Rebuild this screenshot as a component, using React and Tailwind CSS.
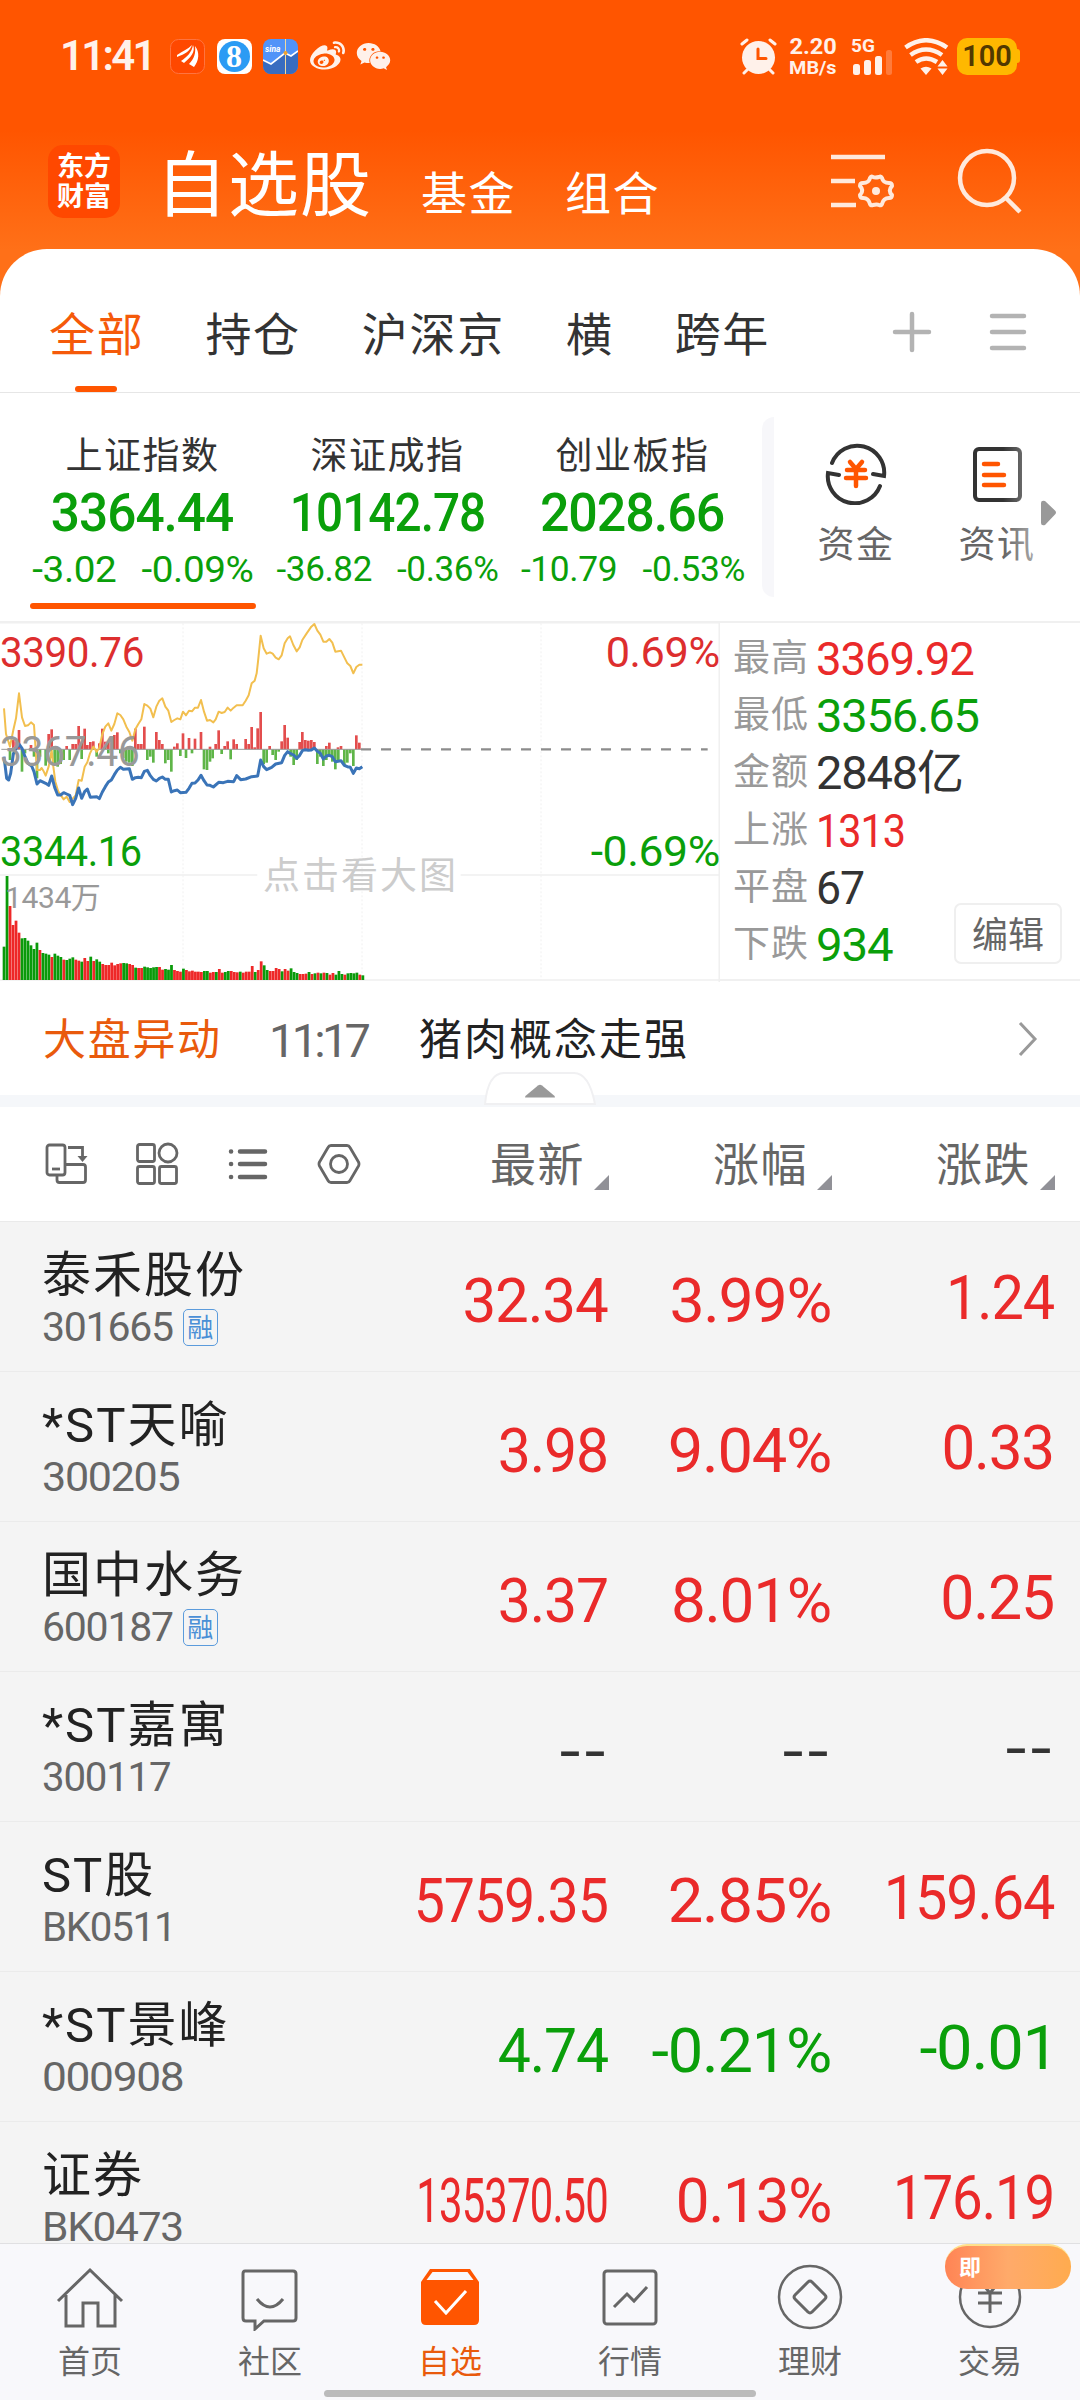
import React from 'react';
import { FaWeibo, FaWeixin } from 'react-icons/fa';

const RED = 'text-[#ea2a2a]';
const GREEN = 'text-[#0a9f0a]';
const DARK = 'text-[#333333]';

const tabs = ['全部', '持仓', '沪深京', '横', '跨年'];

const indexes = [
  { name: '上证指数', value: '3364.44', diff: '-3.02', pct: '-0.09%', active: true, size: 'text-[37px] gap-[24px] scale-x-[1.045]', fit: 'scale-x-[0.97]' },
  { name: '深证成指', value: '10142.78', diff: '-36.82', pct: '-0.36%', size: 'text-[35px] gap-[25px]', fit: 'scale-x-[0.9]' },
  { name: '创业板指', value: '2028.66', diff: '-10.79', pct: '-0.53%', size: 'text-[35px] gap-[25px] scale-x-[1.01]', fit: 'scale-x-[0.98]' },
];

const stats = [
  { label: '最高', value: '3369.92', color: RED, fit: 'scale-x-[0.97]' },
  { label: '最低', value: '3356.65', color: GREEN, fit: 'scale-x-[1]' },
  { label: '金额', value: '2848亿', color: DARK, fit: 'scale-x-[1]' },
  { label: '上涨', value: '1313', color: RED, fit: 'scale-x-[0.88]' },
  { label: '平盘', value: '67', color: DARK, fit: 'scale-x-[0.95]' },
  { label: '下跌', value: '934', color: GREEN, fit: 'scale-x-[1.01]' },
];

const stocks = [
  { name: '泰禾股份', code: '301665', margin: true, color: RED, price: '32.34', pct: '3.99%', diff: '1.24', priceFit: 'scale-x-[0.97]', pctFit: 'scale-x-[1.01]', diffFit: 'scale-x-[0.93]' },
  { name: '*ST天喻', code: '300205', color: RED, price: '3.98', pct: '9.04%', diff: '0.33', codeFit: 'scale-x-[1.05]', priceFit: 'scale-x-[0.95]', pctFit: 'scale-x-[1.02]', diffFit: 'scale-x-[0.97]' },
  { name: '国中水务', code: '600187', margin: true, color: RED, price: '3.37', pct: '8.01%', diff: '0.25', priceFit: 'scale-x-[0.95]', diffFit: 'scale-x-[0.98]' },
  { name: '*ST嘉寓', code: '300117', color: DARK, price: '--', pct: '--', diff: '--', dashes: true, codeFit: 'scale-x-[0.98]' },
  { name: 'ST股', code: 'BK0511', color: RED, price: '5759.35', pct: '2.85%', diff: '159.64', codeFit: 'scale-x-[0.98]', priceFit: 'scale-x-[0.895]', pctFit: 'scale-x-[1.02]', diffFit: 'scale-x-[0.93]' },
  { name: '*ST景峰', code: '000908', color: GREEN, price: '4.74', pct: '-0.21%', diff: '-0.01', codeFit: 'scale-x-[1.08]', priceFit: 'scale-x-[0.95]', pctFit: 'scale-x-[1.02]', diffFit: 'mr-[-4px] scale-x-[1.05]' },
  { name: '证券', code: 'BK0473', color: RED, price: '135370.50', pct: '0.13%', diff: '176.19', codeFit: 'scale-x-[1.035]', priceFit: 'scale-x-[0.675]', pctFit: 'scale-x-[0.97]', diffFit: 'scale-x-[0.88]' },
];

// Chart series, three units per pixel
const averageLine =
  '12,295 18,372 30,410 40,360 48,325 57,250 66,322 75,348 84,346 93,337 102,345 107,420 111,480 120,480 125,474 130,482 137,497 146,470 155,420 160,470 166,515 175,545 191,568 200,560 209,576 218,566 227,556 236,510 245,512 254,470 262,457 270,430 280,410 290,425 298,414 307,372 316,350 325,340 334,362 343,342 352,310 361,315 370,328 379,350 388,366 397,392 406,358 415,342 424,328 433,282 442,287 451,296 460,322 469,290 478,272 487,265 496,290 505,302 514,336 523,330 532,325 541,328 549,305 558,316 567,302 576,304 585,293 594,293 603,270 612,305 621,332 630,330 640,337 647,328 656,305 665,309 674,306 683,293 692,302 701,293 710,286 728,286 737,272 746,256 755,220 764,212 770,190 774,155 782,77 791,115 800,131 810,127 818,131 827,143 836,148 845,136 854,100 863,85 870,79 880,105 890,124 899,112 907,90 920,70 934,50 943,42 952,62 961,74 970,95 979,95 988,87 997,98 1006,125 1023,122 1033,142 1042,160 1051,168 1060,190 1069,171 1078,164 1087,164';
const priceLine =
  '12,440 20,505 26,510 32,490 40,432 48,415 57,402 66,415 75,440 84,460 95,468 102,485 111,522 120,512 137,520 146,526 155,498 164,532 173,555 182,555 191,548 200,552 209,556 218,584 227,565 236,534 245,565 254,545 262,537 271,562 280,561 290,560 298,566 307,546 316,530 325,516 334,510 343,494 352,480 361,472 370,478 379,477 388,476 397,508 406,503 415,502 424,503 433,484 442,481 451,497 460,508 469,513 478,505 487,501 496,508 505,508 514,546 523,542 532,540 541,548 558,547 567,535 576,520 585,519 594,510 603,496 612,512 621,525 630,526 640,531 656,517 670,518 683,514 701,515 710,497 722,509 737,507 755,500 773,498 782,450 791,470 800,479 815,472 827,462 845,458 854,436 863,425 872,431 881,435 890,445 899,436 907,422 916,419 925,421 934,420 943,414 952,424 961,430 970,447 979,438 988,436 997,440 1006,455 1023,452 1033,466 1042,470 1051,472 1060,490 1069,474 1078,476 1087,470';

const upBars = [
  [40, 390], [48, 395], [57, 360], [93, 405], [146, 372], [155, 358], [200, 408], [218, 402], [227, 402], [236, 348], [245, 398], [254, 356],
  [262, 405], [271, 396], [280, 394], [298, 400], [307, 356], [316, 395], [325, 395], [334, 398], [343, 375], [352, 367], [406, 356], [415, 402],
  [424, 402], [433, 350], [469, 366], [478, 390], [487, 402], [523, 410], [532, 400], [549, 370], [567, 384], [585, 386], [603, 366], [630, 410],
  [647, 402], [656, 361], [674, 408], [683, 394], [701, 388], [710, 402], [737, 387], [746, 402], [755, 351], [764, 412], [773, 355], [782, 306],
  [809, 408], [845, 394], [854, 345], [863, 383], [899, 396], [907, 366], [916, 390], [925, 392], [934, 390], [943, 396], [979, 408], [988, 398],
  [1014, 412], [1023, 408], [1069, 376], [1078, 398],
];
const downBars = [
  [30, 450], [66, 485], [75, 430], [102, 440], [111, 505], [120, 440], [137, 467], [164, 465], [173, 470], [182, 462], [191, 450], [209, 450],
  [245, 447], [290, 440], [325, 430], [361, 430], [370, 445], [379, 455], [388, 458], [397, 468], [442, 450], [451, 440], [460, 458], [496, 460],
  [505, 450], [514, 485], [541, 438], [558, 444], [576, 430], [612, 478], [621, 480], [630, 455], [638, 445], [665, 432], [692, 448], [791, 462],
  [800, 458], [818, 435], [827, 450], [836, 425], [872, 440], [881, 465], [890, 450], [952, 462], [961, 440], [970, 468], [979, 450], [988, 440],
  [997, 455], [1006, 478], [1015, 455], [1033, 468], [1042, 458], [1051, 430], [1060, 468],
];

const volumeTops = [
  1010, 798, 888, 945, 932, 968, 985, 984, 992, 1006, 1017, 998, 1020, 1029, 1031, 1034, 1041, 1031, 1037, 1041, 1049, 1050, 1046, 1042, 1049,
  1052, 1055, 1044, 1053, 1040, 1053, 1048, 1055, 1062, 1065, 1065, 1058, 1066, 1062, 1060, 1059, 1060, 1062, 1065, 1073, 1074, 1074, 1070, 1072,
  1074, 1072, 1071, 1071, 1079, 1077, 1079, 1065, 1080, 1083, 1085, 1076, 1080, 1084, 1082, 1085, 1085, 1086, 1083, 1083, 1088, 1086, 1086, 1077,
  1088, 1086, 1083, 1083, 1086, 1087, 1085, 1088, 1085, 1085, 1068, 1086, 1080, 1054, 1066, 1080, 1083, 1083, 1074, 1077, 1084, 1077, 1082, 1075,
  1086, 1089, 1092, 1092, 1091, 1086, 1092, 1090, 1088, 1090, 1088, 1089, 1094, 1089, 1094, 1083, 1092, 1094, 1090, 1089, 1090, 1088, 1094, 1096, 1092,
];
const volumeColors =
  'ggrrrrggggggrgggrgggrgggrrgrrgrggrrrrrrrggrrgrrgggggrrgggrrrgrrrrrrggrrgrrggrrrgrrrrgrrggrrrrgrrgggrrrgrgrgrgrrgggrggggrgr';

function StatusBar() {
  return (
    <div className="flex h-[112px] items-center pl-[60px] pr-[60px] text-[#fff1ea]">
      <span className="w-[110px] text-[42px] font-semibold tracking-[-0.065em] leading-none">11:41</span>
      <div className="flex items-center gap-[11.500px]">
        <svg className="h-[35px] w-[35px]" viewBox="0 0 35 35">
          <rect x="0.5" y="0.5" width="34" height="34" rx="8" fill="#ff4800" stroke="#ff7440" />
          <path d="M7 16c6-4 11-6 15-10-2 6-7 9-15 12z" fill="#fff" />
          <path d="M11 22C17 18 22 13 23 6c3 7-3 13-9 18z" fill="#fff" />
          <path d="M19 25c5-5 7-11 6-18 5 6 4 15-1 21z" fill="#fff" />
        </svg>
        <span className="flex h-[35px] w-[35px] items-center justify-center rounded-[8px] bg-white">
          <span className="flex h-[31px] w-[31px] items-center justify-center rounded-full bg-[#2b9bf4] font-['Liberation_Serif',serif] text-[32px] font-bold leading-none text-white">8</span>
        </span>
        <svg className="h-[35px] w-[35px]" viewBox="0 0 35 35">
          <rect width="35" height="35" rx="8" fill="#5193f8" />
          <path d="M0 21l8 4L22 14l6 3 7-5v15a8 8 0 0 1-8 8H8a8 8 0 0 1-8-8z" fill="#386cc0" />
          <path d="M0 21l8 4L22 14l6 3 7-5" fill="none" stroke="#fff" strokeWidth="1.600" />
          <path d="M22.500 0v35" stroke="#f0d9a0" strokeWidth="1" />
          <circle cx="22.500" cy="14" r="2" fill="#f2a32c" />
          <text x="2" y="12.500" fontSize="8.500" fontStyle="italic" fontWeight="700" fill="#fff">sina</text>
        </svg>
        <FaWeibo className="h-[35px] w-[35px]" />
        <FaWeixin className="h-[35px] w-[35px]" />
      </div>
      <div className="ml-auto flex items-center">
        <svg className="h-[37px] w-[37px]" viewBox="0 0 37 37" fill="none" strokeLinecap="round">
          <circle cx="18.500" cy="19.500" r="16.500" fill="#fff1ea" />
          <path d="M2 6l5-4M35 6l-5-4M7 32l-3 3M30 32l3 3" stroke="#fff1ea" strokeWidth="3" />
          <path d="M18 11v9.500h8" stroke="#ff5500" strokeWidth="3" />
        </svg>
        <div className="ml-[12px] flex w-[48px] flex-col items-center font-bold leading-none">
          <span className="text-[22px] leading-[22px] scale-x-[1.07]">2.20</span>
          <span className="text-[19px] leading-[19px] scale-x-[1.04]">MB/s</span>
        </div>
        <div className="ml-[14px] flex h-[37px] w-[42px] flex-col">
          <span className="mt-[-2px] text-[19px] font-bold leading-[19px]">5G</span>
          <svg className="mt-[-5px] h-[25px] w-[42px]" viewBox="0 0 42 25" fill="#fff1ea">
            <rect x="2" y="14" width="7" height="11" rx="2.500" />
            <rect x="13" y="10" width="7" height="15" rx="2.500" />
            <rect x="24" y="6" width="7" height="19" rx="2.500" />
            <rect x="35" y="0" width="6" height="25" rx="2.500" opacity="0.25" />
          </svg>
        </div>
        <svg className="ml-[11px] h-[37px] w-[45px]" viewBox="0 0 45 37" fill="none" stroke="#fff1ea">
          <path d="M1.500 9.500Q22 -5 43 9.500" strokeWidth="4.500" />
          <path d="M6.500 17Q22 6 38 17" strokeWidth="4.500" />
          <path d="M12 24Q22 17 33 24" strokeWidth="4.500" />
          <path d="M16.500 30.500q5.500-3.500 11 0l-5.500 6.500z" fill="#fff1ea" stroke="none" />
          <path d="M33.500 28.500l5-6.500 5 6.500zM33.500 30.500l5 6.500 5-6.500z" fill="#fff1ea" stroke="none" />
        </svg>
        <div className="ml-[8px] flex items-center">
          <div className="flex h-[37px] w-[60px] items-center justify-center rounded-[10px] bg-[#ffb800] text-[29px] font-semibold leading-none text-[#523800]">100</div>
          <div className="h-[14px] w-[3px] rounded-r-[3px] bg-[#ffb800]" />
        </div>
      </div>
    </div>
  );
}

function TitleBar() {
  return (
    <div className="flex h-[137px] pl-[48px] text-white">
      <div className="mt-[33px] flex h-[73px] w-[72px] flex-col items-center justify-center rounded-[15px] bg-[#ff4800] text-[27px] font-bold leading-[30px]">
        <span>东方</span>
        <span>财富</span>
      </div>
      <span className="ml-[36px] mt-[38px] w-[265px] text-[71px] leading-none tracking-[1px]">自选股</span>
      <span className="mt-[59px] w-[144px] text-[46px] leading-none tracking-[1.500px]">基金</span>
      <span className="mt-[59px] w-[144px] text-[46px] leading-none tracking-[1.500px]">组合</span>
      <svg className="ml-[122px] mt-[41px] h-[58px] w-[64px]" viewBox="0 0 64 58" fill="none" stroke="#ffe9dc" strokeWidth="4">
        <path d="M0 4h54M0 28h24M0 52h25" strokeWidth="4.500" />
        <path
          d="M39 25q1-2 3-1t6 0q2-1 3 1c1 4 3 5 7 5q3 0 3 3c-3 3-3 6 0 9q0 3-3 3c-4 0-6 2-7 6q-1 2-3 1t-6 0q-2 1-3-1c-1-4-3-6-7-6q-3 0-3-3c3-3 3-6 0-9q0-3 3-3c4 0 6-1 7-5z"
          strokeLinejoin="round"
        />
        <circle cx="45" cy="38" r="4" fill="#ffe9dc" stroke="none" />
      </svg>
      <svg className="ml-[62px] mt-[36px] h-[66px] w-[66px]" viewBox="0 0 66 66" fill="none" stroke="#ffe9dc" strokeWidth="4.500">
        <circle cx="30" cy="30" r="27" />
        <path d="M49 50l14 14" />
      </svg>
    </div>
  );
}

function GroupTabs() {
  return (
    <div className="flex h-[144px] items-center border-b border-[#e6e6e6] pl-[49px] text-[46px] leading-none text-[#333333]">
      <div className="flex h-full items-center gap-[61px]">
        {tabs.map((tab, i) => (
          <div key={tab} className={i === 0 ? 'relative flex h-full items-center text-[#f55a0a]' : 'flex h-full items-center'}>
            <span className="mt-[28px] tracking-[1.700px]">{tab}</span>
            {i === 0 && <div className="absolute bottom-0 left-[26px] h-[6px] w-[42px] rounded-[3px] bg-[#ff5500]" />}
          </div>
        ))}
      </div>
      <svg className="ml-auto mt-[23px] h-[42px] w-[40px]" viewBox="0 0 40 42" stroke="#b3b3b3" strokeWidth="4.500" strokeLinecap="round">
        <path d="M20 3v36M3 21h34" />
      </svg>
      <svg className="ml-[57px] mr-[53px] mt-[23px] h-[42px] w-[38px]" viewBox="0 0 38 42" stroke="#b3b3b3" strokeWidth="4.500" strokeLinecap="round">
        <path d="M3 5h32M3 21h32M3 37h32" />
      </svg>
    </div>
  );
}

function IndexStrip() {
  return (
    <div className="flex h-[228px]">
      <div className="flex pl-[20px]">
        {indexes.map((item) => (
          <div key={item.name} className="flex w-[245px] flex-col items-center">
            <span className="mt-[45px] text-[37px] leading-none tracking-[1.500px] text-[#333333]">{item.name}</span>
            <span className={`mt-[12px] text-[53px] font-medium leading-none tracking-[-0.02em] text-[#0a9f0a] ${item.fit}`}>{item.value}</span>
            <div className={`mt-[11px] flex h-[36px] items-center leading-none tracking-[-0.01em] text-[#0a9f0a] ${item.size}`}>
              <span>{item.diff}</span>
              <span>{item.pct}</span>
            </div>
            {item.active && <div className="mt-[16px] h-[6px] w-[226px] rounded-full bg-[#ff5500]" />}
          </div>
        ))}
      </div>
      <div className="ml-[7px] mt-[24px] h-[180px] w-[12px] rounded-l-[12px] bg-[#f7f7fa]" />
      <div className="ml-[40px] flex w-[84px] flex-col items-center">
        <svg className="mt-[50px] h-[62px] w-[62px]" viewBox="0 0 62 62" fill="none" stroke="#333333" strokeWidth="4">
          <path d="M7 20a27 27 0 0 1 52 13l-11-2" strokeLinecap="round" />
          <path d="M55 43A27 27 0 0 1 3 30l11 2" strokeLinecap="round" />
          <path d="M25 19l6 7 6-7M31 26v17M22 27h18M21 35h20" stroke="#ff5500" strokeWidth="4.500" strokeLinecap="round" />
        </svg>
        <span className="mt-[22px] whitespace-nowrap text-[37px] leading-none tracking-[1.500px] text-[#666666]">资金</span>
      </div>
      <div className="relative ml-[57px] flex w-[84px] flex-col items-center">
        <svg className="mt-[52px] h-[58px] w-[50px]" viewBox="0 0 50 58" fill="none" stroke="#333333" strokeWidth="4">
          <rect x="3" y="4" width="45" height="51" rx="4" />
          <path d="M12 19h14M12 30h20M12 40h20" stroke="#ff5500" strokeWidth="4.500" strokeLinecap="round" />
        </svg>
        <span className="mt-[24px] whitespace-nowrap text-[37px] leading-none tracking-[1.500px] text-[#666666]">资讯</span>
        <div className="absolute right-0 top-[40px] h-[130px] w-[36px] bg-gradient-to-r from-white/0 to-white/50" />
      </div>
      <svg className="ml-[2px] mt-[107px] h-[26px] w-[16px]" viewBox="0 0 16 26">
        <path d="M0 3q0-3 4-2l10 9.500q2 2 0 4L4 25q-4 1-4-2z" fill="#999999" />
      </svg>
    </div>
  );
}

function MinuteChart() {
  return (
    <div className="relative h-[360px] w-[720px] overflow-hidden">
      <svg className="h-[360px] w-[720px]" viewBox="0 36 2160 1080" fill="none">
        <path d="M0 38h2160M0 795h772M1382 795h778M0 1110h2160M2158 36v1080" stroke="#f0f0f0" strokeWidth="5" />
        <path d="M549 40v1070M1086 40v1070M1623 40v1070" stroke="#f0f0f0" strokeWidth="3" strokeDasharray="6 6" />
        {upBars.map(([x, y]) => (
          <rect key={`u${x}`} x={x - 4} y={y} width="8" height={418 - y} fill="#e34d4d" />
        ))}
        {downBars.map(([x, y]) => (
          <rect key={`d${x}`} x={x - 4} y="418" width="8" height={y - 418} fill="#5fb548" />
        ))}
        <path d="M4 418h1082" stroke="#999999" strokeWidth="3" />
        <path d="M1083 418h1040" stroke="#8c8c8c" strokeWidth="7" strokeDasharray="30 30" />
        <polyline points={averageLine} stroke="#f2bf4f" strokeWidth="6" strokeLinejoin="round" />
        <polyline points={priceLine} stroke="#3a74b8" strokeWidth="9" strokeLinejoin="round" />
        {volumeTops.slice(0, 121).map((y, i) => (
          <rect key={i} x={8 + i * 8.97} y={y} width="8.300" height={1110 - y} fill={volumeColors[i] === 'r' ? '#ee2828' : '#0a9a0a'} />
        ))}
      </svg>
      <div className="absolute inset-0 leading-none tracking-[-0.025em]">
        <span className="absolute left-0 top-[10px] origin-left scale-x-[0.96] text-[42px] text-[#dd2e2e]">3390.76</span>
        <span className="absolute left-0 top-[109px] origin-left scale-x-[0.93] text-[42px] text-[#999999]">3367.46</span>
        <span className="absolute left-0 top-[209px] origin-left scale-x-[0.945] text-[42px] text-[#0a9f0a]">3344.16</span>
        <span className="absolute left-[5px] top-[261px] text-[30px] text-[#999999]">1434万</span>
        <span className="absolute right-0 top-[10px] origin-right scale-x-[1.03] text-[42px] text-[#dd2e2e]">0.69%</span>
        <span className="absolute right-0 top-[209px] origin-right scale-x-[1.06] text-[42px] text-[#0a9f0a]">-0.69%</span>
        <span className="absolute left-[263px] top-[236px] text-[37px] tracking-[2px] text-[#cccccc]">点击看大图</span>
      </div>
    </div>
  );
}

function MarketPanel() {
  return (
    <div className="flex h-[360px] border-t-2 border-[#f0f0f0]">
      <div className="mt-[-1px] w-[720px]">
        <MinuteChart />
      </div>
      <div className="relative flex flex-1 flex-col border-b-2 border-[#f0f0f0] pl-[13px] pt-[7px]">
        {stats.map((row) => (
          <div key={row.label} className="flex h-[57.200px] items-center leading-none">
            <span className="w-[83px] text-[37px] tracking-[1px] text-[#999999]">{row.label}</span>
            <span className={`origin-left text-[47px] tracking-[-0.025em] ${row.color} ${row.fit}`}>{row.value}</span>
          </div>
        ))}
        <button className="absolute bottom-[15px] right-[18px] h-[61px] w-[108px] rounded-[7px] border-2 border-[#efefef] bg-white pt-[4px] text-[36px] leading-none text-[#666666]">
          编辑
        </button>
      </div>
    </div>
  );
}

function NewsRow() {
  return (
    <div className="relative h-[126px] border-b-[12px] border-[#f5f7fa]">
      <div className="flex h-[119px] items-center leading-none">
        <span className="ml-[43px] w-[226px] text-[43px] tracking-[1.700px] text-[#e95a0c]">大盘异动</span>
        <span className="w-[150px] text-[47px] tracking-[-0.08em] text-[#666666]">11:17</span>
        <span className="text-[43px] tracking-[2px] text-[#222222]">猪肉概念走强</span>
        <svg className="ml-auto mr-[42px] mt-[-4px] h-[36px] w-[20px]" viewBox="0 0 20 36" fill="none" stroke="#999999" strokeWidth="3">
          <path d="M2 2l15 16L2 34" />
        </svg>
      </div>
      <svg className="absolute left-[484px] top-[90px] h-[36px] w-[112px]" viewBox="0 0 112 36">
        <path d="M1 33q3-31 19-31h70q15 0 21 31z" fill="#fff" stroke="#f0f0f2" strokeWidth="2" />
        <path d="M42 26.500q-2 0 0-2l12-10q2-1.500 4 0l12 10q2 2 0 2z" fill="#999999" />
      </svg>
    </div>
  );
}

function SortHead({ label }) {
  return (
    <div className="flex w-[223px] items-center justify-end pr-[1px]">
      <span className="mt-[2px] text-[46px] leading-none tracking-[1.500px]">{label}</span>
      <svg className="ml-[9px] mt-[37px] h-[15px] w-[15px]" viewBox="0 0 15 15">
        <path d="M15 0v15H0z" fill="#919197" />
      </svg>
    </div>
  );
}

function ListHeader() {
  return (
    <div className="flex h-[115px] items-center border-b border-[#eaeaea] text-[#666666]">
      <div className="flex w-[387px] items-center gap-[47px] pl-[44px]">
        <svg className="h-[44px] w-[44px]" viewBox="0 0 44 44" fill="none" stroke="currentColor" strokeWidth="2.800">
          <rect x="3" y="3" width="18" height="30" rx="2.500" />
          <path d="M8 27h8" />
          <path d="M13 34v4q0 2.500 2.500 2.500H39q2.500 0 2.500-2.500V25q0-2.500-2.500-2.500H22" />
          <path d="M24 5.500h14.500V17" />
          <path d="M33.500 14h10l-5 6z" fill="currentColor" stroke="none" />
        </svg>
        <svg className="h-[44px] w-[44px]" viewBox="0 0 44 44" fill="none" stroke="currentColor" strokeWidth="2.800">
          <rect x="2.500" y="2.500" width="17" height="17" rx="2" />
          <circle cx="33" cy="11" r="9" />
          <rect x="2.500" y="24.500" width="17" height="17" rx="2" />
          <rect x="24.500" y="24.500" width="17" height="17" rx="2" />
        </svg>
        <svg className="h-[44px] w-[44px]" viewBox="0 0 44 44" fill="none" stroke="currentColor" strokeWidth="4.500" strokeLinecap="round">
          <path d="M14 9.500h25M14 22h25M14 35h25M5 9.500h.1M5 22h.1M5 35h.1" />
        </svg>
        <svg className="h-[44px] w-[44px]" viewBox="0 0 44 44" fill="none" stroke="currentColor" strokeWidth="2.800" strokeLinejoin="round">
          <path d="M14 3.500h16q2 0 3 2l8.500 14.500q1 2 0 4L33 38.500q-1 2-3 2H14q-2 0-3-2L2.500 24q-1-2 0-4L11 5.500q1-2 3-2z" />
          <circle cx="22" cy="22" r="8.500" />
        </svg>
      </div>
      <SortHead label="最新" />
      <SortHead label="涨幅" />
      <SortHead label="涨跌" />
    </div>
  );
}

function StockRow({ stock }) {
  const cell = stock.dashes ? 'flex w-[223px] justify-end tracking-[0.06em]' : 'flex w-[223px] justify-end tracking-[-0.02em]';
  const fit = stock.dashes ? 'mr-[-2px] origin-right scale-x-[1.2]' : 'origin-right';

  return (
    <div className={`flex h-[150px] shrink-0 border-b border-[#ebebeb] text-[62px] leading-none ${stock.color}`}>
      <div className="w-[385px] pl-[42px]">
        <div className="mt-[29px] text-[49px] tracking-[2px] text-[#222222]">{stock.name}</div>
        <div className="mt-[7px] flex items-center">
          <span className={`origin-left text-[41px] tracking-[-0.03em] text-[#666666] ${stock.codeFit || ''}`}>{stock.code}</span>
          {stock.margin && (
            <span className="ml-[10px] flex h-[37px] w-[35px] items-center justify-center rounded-[5px] border border-[#5b9bdc] text-[26px] text-[#4a8fd6]">融</span>
          )}
        </div>
      </div>
      <div className={`mt-[48px] ${cell}`}>
        <span className={`${fit} ${stock.priceFit || ''}`}>{stock.price}</span>
      </div>
      <div className={`mt-[48px] ${cell}`}>
        <span className={`${fit} ${stock.pctFit || ''}`}>{stock.pct}</span>
      </div>
      <div className={`mt-[45px] ${cell}`}>
        <span className={`${fit} ${stock.diffFit || ''}`}>{stock.diff}</span>
      </div>
    </div>
  );
}

function NavItem({ label, active, children }) {
  return (
    <div className={active ? 'relative flex w-[180px] flex-col items-center text-[#e95a0c]' : 'relative flex w-[180px] flex-col items-center text-[#666666]'}>
      <svg className="mt-[19px] h-[68px] w-[68px]" viewBox="0 0 68 68" fill="none" stroke="currentColor" strokeWidth="3">
        {children}
      </svg>
      <span className="mt-[15px] text-[32px] leading-none">{label}</span>
    </div>
  );
}

function BottomNav() {
  return (
    <div className="h-[157px] border-t border-[#e0e0e2] bg-[#f8f8fb]">
      <div className="flex h-[146px]">
        <NavItem label="首页">
          <path d="M2 38L34 7l32 31M10 32v31h17V40h15v23h17V32" />
        </NavItem>
        <NavItem label="社区">
          <path d="M9 8h48q3 0 3 3v44q0 3-3 3H28l-9 8v-8h-9q-3 0-3-3V11q0-3 2-3z" />
          <path d="M21 36q13 16 26 0" />
        </NavItem>
        <NavItem label="自选" active>
          <path d="M5 19L14 6h40l9 13v38q0 5-5 5H10q-5 0-5-5z" fill="#ff5500" stroke="none" />
          <path d="M16.500 9h35l6 8h-47z" fill="#f8f8fb" stroke="none" />
          <path d="M19 38l11 12 20-22" stroke="#fff" />
        </NavItem>
        <NavItem label="行情">
          <rect x="8" y="8" width="52" height="53" rx="3" />
          <path d="M18 44l13-13 7 7 13-14" />
        </NavItem>
        <NavItem label="理财">
          <circle cx="34" cy="34" r="31" strokeWidth="2.500" />
          <path d="M32 19q2-2 4 0l13 13q2 2 0 4L36 49q-2 2-4 0L19 36q-2-2 0-4z" />
        </NavItem>
        <div className="relative">
          <NavItem label="交易">
            <circle cx="34" cy="34" r="30" strokeWidth="2.500" />
            <path d="M24 18l10 12 10-12M22 30h24M22 40h24M34 30v20" />
          </NavItem>
          <div className="absolute left-[45px] top-0 flex h-[45px] w-[126px] items-center rounded-[22px] border-t-2 border-[#ffe08a] bg-gradient-to-r from-[#ff8455] via-[#ffaa6a] to-[#ffab4e] pl-[14px] text-[22px] font-bold leading-none text-white">
            即
          </div>
        </div>
      </div>
      <div className="mx-auto h-[7px] w-[432px] rounded-full bg-[#bbbbbb]" />
    </div>
  );
}

export default function App() {
  return (
    <div className="flex h-[2400px] w-[1080px] flex-col overflow-hidden bg-[linear-gradient(#ff5500_0px,#ff5500_130px,#ff7018_250px,#ff7018_100%)] font-['Roboto','Noto_Sans_CJK_SC',sans-serif]">
      <StatusBar />
      <TitleBar />
      <div className="flex min-h-0 flex-1 flex-col rounded-t-[47px] bg-white">
        <GroupTabs />
        <IndexStrip />
        <MarketPanel />
        <NewsRow />
        <ListHeader />
        <div className="flex min-h-0 flex-1 flex-col overflow-hidden bg-[#f4f4f4]">
          {stocks.map((stock) => (
            <StockRow key={stock.code} stock={stock} />
          ))}
        </div>
        <BottomNav />
      </div>
    </div>
  );
}
